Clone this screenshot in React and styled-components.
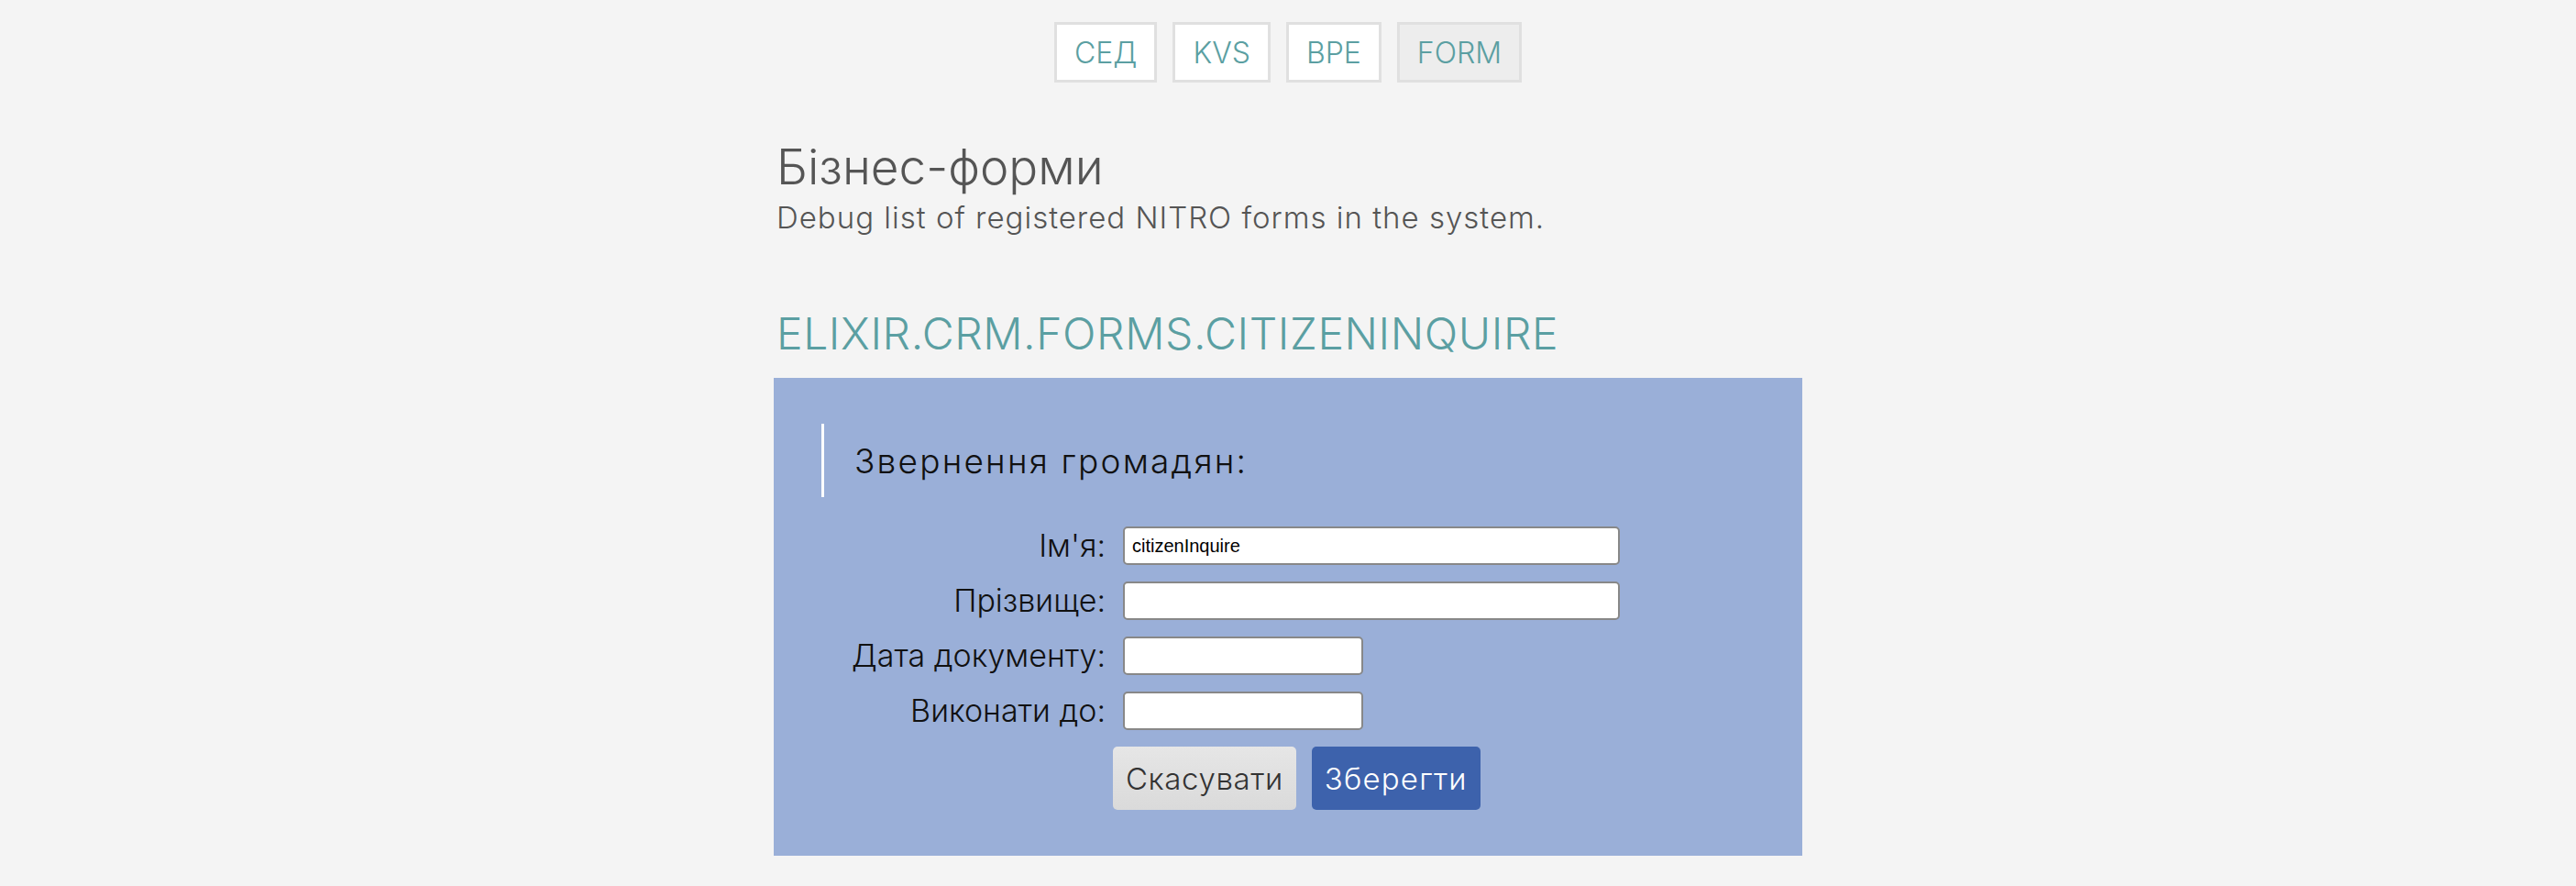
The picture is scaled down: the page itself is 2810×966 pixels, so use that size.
import styled, { createGlobalStyle } from "styled-components"

const GlobalStyle = createGlobalStyle`
body {
    margin: 0;
    background: #f4f4f4;
    font-family: 'Inter', 'Noto Sans', sans-serif;
    font-weight: 300;
}
`

const tabs = [
    { label: "СЕД" },
    { label: "KVS" },
    { label: "BPE" },
    { label: "FORM", active: true },
]

const fields = [
    { label: "Ім'я:", value: "citizenInquire", wide: true },
    { label: "Прізвище:", value: "", wide: true },
    { label: "Дата документу:", value: "", wide: false },
    { label: "Виконати до:", value: "", wide: false },
]

export default function App() {
    return (
        <>
            <GlobalStyle />
            <Nav>
                {tabs.map((t) => (
                    <NavButton key={t.label} $active={t.active}>{t.label}</NavButton>
                ))}
            </Nav>
            <Page>
                <Titulo>Бізнес-форми</Titulo>
                <Subtitulo>Debug list of registered NITRO forms in the system.</Subtitulo>
                <NomeForma>ELIXIR.CRM.FORMS.CITIZENINQUIRE</NomeForma>
                <Caixa>
                    <Legenda>Звернення громадян:</Legenda>
                    <Grade>
                        {fields.map((f) => (
                            <Linha key={f.label}>
                                <Rotulo>{f.label}</Rotulo>
                                <Campo type="text" defaultValue={f.value} $wide={f.wide} />
                            </Linha>
                        ))}
                        <Botoes>
                            <BotaoCancelar>Скасувати</BotaoCancelar>
                            <BotaoSalvar>Зберегти</BotaoSalvar>
                        </Botoes>
                    </Grade>
                </Caixa>
            </Page>
        </>
    )
}

const Nav = styled.div`
display: flex;
justify-content: center;
gap: 17px;
padding-top: 24px;
`

const NavButton = styled.div`
height: 66px;
box-sizing: border-box;
padding: 0 19px;
display: flex;
align-items: center;
border: 3px solid #e0e0e0;
background: ${(p) => (p.$active ? "#ededed" : "#ffffff")};
color: #5b9fa2;
font-size: 32px;
font-weight: 300;
`

const Page = styled.div`
width: 1122px;
margin: 0 auto;
`

const Titulo = styled.h1`
margin: 60px 0 0 3px;
font-size: 53px;
line-height: 65px;
font-weight: 300;
color: #555555;
`

const Subtitulo = styled.p`
margin: 2px 0 0 3px;
font-size: 33px;
line-height: 40px;
font-weight: 300;
letter-spacing: 1px;
color: #555555;
`

const NomeForma = styled.h2`
margin: 78px 0 0 3px;
font-size: 48px;
line-height: 58px;
font-weight: 300;
letter-spacing: 0.6px;
color: #5b9fa2;
`

const Caixa = styled.div`
margin-top: 19px;
background: #9aafd8;
padding: 50px 52px;
`

const Legenda = styled.div`
height: 80px;
display: flex;
align-items: center;
border-left: 3px solid #ffffff;
padding-left: 33px;
font-size: 37px;
font-weight: 300;
letter-spacing: 2.2px;
color: #111111;
`

const Grade = styled.div`
display: grid;
grid-template-columns: 310px 1fr;
column-gap: 19px;
row-gap: 18px;
margin-top: 32px;
`

const Linha = styled.div`
display: contents;
`

const Rotulo = styled.label`
text-align: right;
align-self: center;
font-size: 34px;
line-height: 42px;
font-weight: 300;
color: #111111;
`

const Campo = styled.input`
width: ${(p) => (p.$wide ? "542px" : "262px")};
height: 42px;
box-sizing: border-box;
border: 2px solid #888888;
border-radius: 5px;
background: #ffffff;
padding: 0 8px;
font-family: 'Liberation Sans', Arial, sans-serif;
font-size: 20px;
color: #000000;
outline: none;
`

const Botoes = styled.div`
grid-column: 2;
display: flex;
gap: 17px;
margin: 0 0 0 -11px;
`

const BotaoCancelar = styled.button`
height: 69px;
padding: 0 14px;
border: none;
border-radius: 5px;
background: linear-gradient(#e6e6e6, #dadada);
color: #333333;
font-family: 'Inter', 'Noto Sans', sans-serif;
font-size: 33px;
font-weight: 300;
letter-spacing: 0.6px;
`

const BotaoSalvar = styled.button`
height: 69px;
padding: 0 14px;
border: none;
border-radius: 5px;
background: #3d62ac;
color: #ffffff;
font-family: 'Inter', 'Noto Sans', sans-serif;
font-size: 33px;
font-weight: 300;
letter-spacing: 1.2px;
`
